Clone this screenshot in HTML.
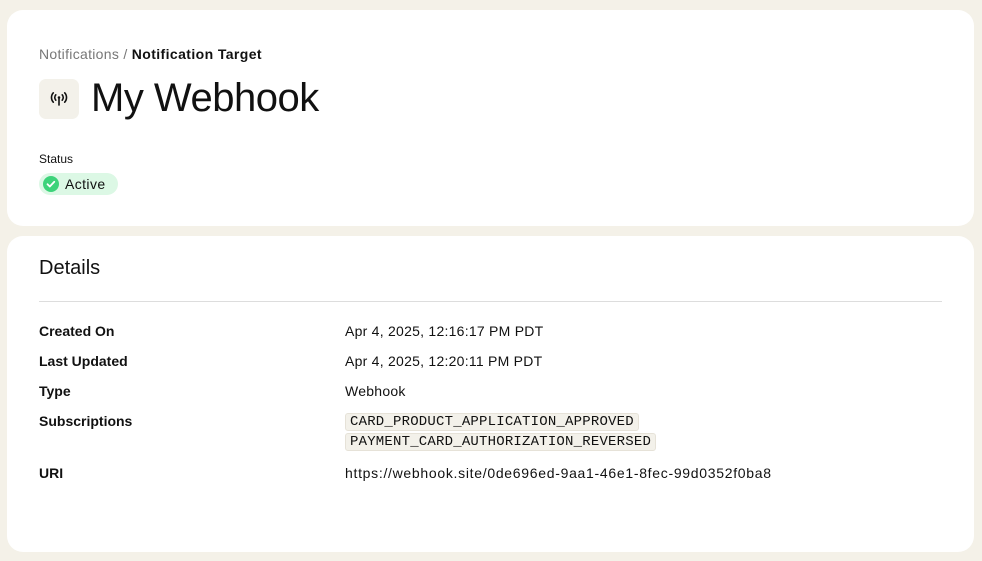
<!DOCTYPE html>
<html><head><meta charset="utf-8"><style>
body{margin:0;width:982px;height:561px;background:#f4f1e8;font-family:"Liberation Sans",sans-serif;color:#111;position:relative;overflow:hidden}
.card{position:absolute;left:7px;width:967px;background:#fff;border-radius:16px}
.bc{position:absolute;left:32px;top:36px;font-size:14px;color:#777;letter-spacing:0.3px}
.bc b{color:#111;font-weight:600;letter-spacing:0.4px}
.ic{position:absolute;left:32px;top:69px;width:40px;height:40px;border-radius:7px;background:#f3f1ea}
h1{position:absolute;left:84px;top:66px;margin:0;font-size:40px;font-weight:400;letter-spacing:-0.5px}
.st{position:absolute;left:32px;top:142px;font-size:12px}
.pill{position:absolute;left:32px;top:163px;height:22px;width:79px;border-radius:11px;background:#dcf8e5;font-size:14px}
.pill .c{position:absolute;left:4px;top:3px;width:16px;height:16px;border-radius:8px;background:#3dd37a}
.pill span{position:absolute;left:26px;top:3px;letter-spacing:0.4px}
h2{position:absolute;left:32px;top:21px;margin:0;font-size:20px;font-weight:400}
.hr{position:absolute;left:32px;right:32px;top:65px;border-top:1px solid #ddd}
.l{position:absolute;left:32px;font-size:14px;font-weight:600}
.v{position:absolute;left:338px;font-size:14px;letter-spacing:0.25px}
code{font-family:"Liberation Mono",monospace;font-size:14px;background:#f3f1ea;border:1px solid #e6e2d8;border-radius:3px;padding:0 4px;display:inline-block;line-height:16px;letter-spacing:0.2px}
</style></head><body>
<div class="card" style="top:10px;height:216px">
<div class="bc">Notifications / <b>Notification Target</b></div>
<div class="ic"><svg width="40" height="40" viewBox="0 0 40 40" fill="none" stroke="#111" stroke-width="1.6" stroke-linecap="round"><path d="M20 20v6"/><circle cx="20" cy="18.5" r="1.3" fill="#111" stroke="none"/><path d="M16.8 15.8a4 4 0 0 0 0 5.4M23.2 15.8a4 4 0 0 1 0 5.4M14.3 13.8a7 7 0 0 0 0 9.4M25.7 13.8a7 7 0 0 1 0 9.4"/></svg></div>
<h1>My Webhook</h1>
<div class="st">Status</div>
<div class="pill"><div class="c"><svg width="16" height="16" viewBox="0 0 16 16"><path d="M4.5 8.2l2.3 2.3 4.5-4.7" fill="none" stroke="#fff" stroke-width="1.8" stroke-linecap="round" stroke-linejoin="round"/></svg></div><span>Active</span></div>
</div>
<div class="card" style="top:236px;height:316px">
<h2>Details</h2>
<div class="hr"></div>
<div class="l" style="top:87px">Created On</div><div class="v" style="top:87px">Apr 4, 2025, 12:16:17 PM PDT</div>
<div class="l" style="top:117px">Last Updated</div><div class="v" style="top:117px">Apr 4, 2025, 12:20:11 PM PDT</div>
<div class="l" style="top:147px">Type</div><div class="v" style="top:147px">Webhook</div>
<div class="l" style="top:177px">Subscriptions</div><div class="v" style="top:176px;letter-spacing:0"><code>CARD_PRODUCT_APPLICATION_APPROVED</code><br><code style="margin-top:2px">PAYMENT_CARD_AUTHORIZATION_REVERSED</code></div>
<div class="l" style="top:229px">URI</div><div class="v" style="top:229px;letter-spacing:0.7px">https://webhook.site/0de696ed-9aa1-46e1-8fec-99d0352f0ba8</div>
</div>
</body></html>
